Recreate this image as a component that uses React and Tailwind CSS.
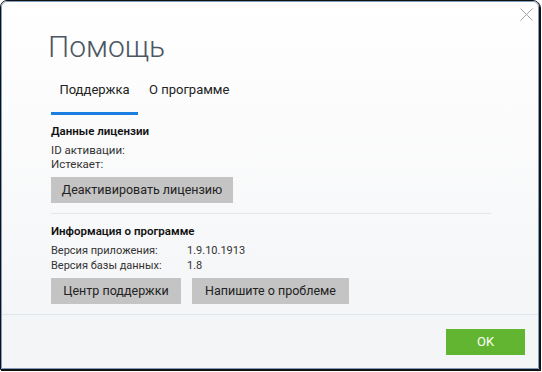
import React from "react";

export default function App() {
  return (
    <div className="w-[542px] h-[372px] bg-white relative" style={{ fontFamily: 'Roboto, "Noto Sans", sans-serif' }}>
      <div className="w-[540px] h-[370px] border border-[#111] rounded-t-[7px] shadow-[1px_1px_0_#111] overflow-hidden">
        <div className="w-full h-full border border-[#7f9cc0] rounded-t-[6px] flex flex-col bg-gradient-to-b from-white to-[#f3f4f6] relative">
          <button className="absolute right-[5px] top-[6px] w-[13px] h-[13px]">
            <svg width="13" height="13" viewBox="0 0 13 13" fill="none" stroke="#a3a3a3" strokeWidth="1">
              <path d="M0.5 0.5 L12.5 12.5 M12.5 0.5 L0.5 12.5" />
            </svg>
          </button>
          <div className="flex-1 min-h-0 px-[49px] pt-[25px]">
            <h1 className="-ml-[3px] text-[30px] font-light leading-[40px] text-[#4b5663]">Помощь</h1>
            <div className="flex mt-[14px]">
              <div className="w-[87px] flex flex-col items-center">
                <span className="text-[13px] leading-[18px] text-[#222]">Поддержка</span>
                <div className="mt-[13px] w-full h-[3px] bg-[#1a7fe0]" />
              </div>
              <span className="ml-[11px] text-[13px] leading-[18px] text-[#222]">О программе</span>
            </div>
            <div className="mt-[8px] w-[440px]">
              <div className="text-[11.5px] font-semibold leading-[16px] text-[#111]">Данные лицензии</div>
              <div className="mt-[4px] text-[11.5px] leading-[14px] text-[#333]">ID активации:</div>
              <div className="text-[11.5px] leading-[14px] text-[#333]">Истекает:</div>
              <button className="block mt-[6px] h-[26px] w-[182px] bg-[#c4c4c4] text-[12.5px] text-[#222]">Деактивировать лицензию</button>
              <div className="mt-[10px] h-px bg-[#e3e6ea]" />
              <div className="mt-[9px] text-[11.5px] font-semibold leading-[16px] text-[#111]">Информация о программе</div>
              <div className="mt-[4px] flex text-[11px] leading-[15px] text-[#333]">
                <span className="w-[136px]">Версия приложения:</span>
                <span>1.9.10.1913</span>
              </div>
              <div className="flex text-[11px] leading-[15px] text-[#333]">
                <span className="w-[136px]">Версия базы данных:</span>
                <span>1.8</span>
              </div>
              <div className="mt-[5px] flex gap-[11px]">
                <button className="h-[26px] w-[130px] bg-[#c4c4c4] text-[12.5px] text-[#222]">Центр поддержки</button>
                <button className="h-[26px] w-[157px] bg-[#c4c4c4] text-[12.5px] text-[#222]">Напишите о проблеме</button>
              </div>
            </div>
          </div>
          <div className="shrink-0 h-[54px] border-t border-[#e0e7f0] bg-[#f4f5f7] flex items-start justify-end pr-[13px] pt-[14px]">
            <button className="h-[26px] w-[79px] bg-[#62b531] text-white text-[13px]">OK</button>
          </div>
        </div>
      </div>
    </div>
  );
}
